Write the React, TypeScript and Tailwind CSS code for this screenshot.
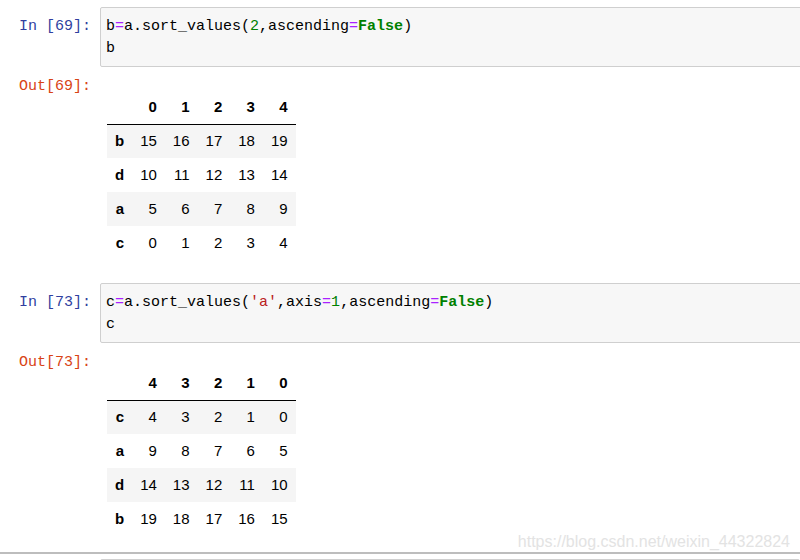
const mono = { fontFamily: '"Liberation Mono", "DejaVu Sans Mono", monospace' };

const tableFont = { fontFamily: '"Liberation Sans", Arial, sans-serif' };

function Eq() {
  return <span className="text-[#aa22ff]">=</span>;
}

function Kw({ children }: { children: string }) {
  return <span className="font-bold text-[#008000]">{children}</span>;
}

function DataTable({ cols, rows }: { cols: string[]; rows: [string, number[]][] }) {
  return (
    <table className="border-collapse text-[15px] text-black" style={tableFont}>
      <thead>
        <tr className="h-[34px] border-b border-black">
          <th className="px-2" />
          {cols.map((c) => (
            <th key={c} className="px-2 text-right font-bold">
              {c}
            </th>
          ))}
        </tr>
      </thead>
      <tbody>
        {rows.map(([idx, vals], i) => (
          <tr key={idx} className={`h-[34px] ${i % 2 === 0 ? "bg-[#f5f5f5]" : "bg-white"}`}>
            <th className="px-2 text-right font-bold">{idx}</th>
            {vals.map((v, j) => (
              <td key={j} className="px-2 text-right">
                {v}
              </td>
            ))}
          </tr>
        ))}
      </tbody>
    </table>
  );
}

function Cell({
  n,
  code,
  cols,
  rows,
}: {
  n: number;
  code: React.ReactNode;
  cols: string[];
  rows: [string, number[]][];
}) {
  return (
    <div className="pt-[7px]">
      <div className="flex">
        <div
          className="w-[100px] shrink-0 pr-[9px] pt-[9px] text-right text-[15px] leading-[22px] text-[#303f9f]"
          style={mono}
        >
          In [{n}]:
        </div>
        <div
          className="-mr-[4px] flex-1 rounded-[2px] border border-[#cfcfcf] bg-[#f7f7f7] pb-[6px] pl-[5px] pt-[8px] text-[15px] leading-[22px] text-black"
          style={mono}
        >
          {code}
        </div>
      </div>
      <div className="flex pt-[7px] pb-[16px]">
        <div
          className="w-[100px] shrink-0 pr-[9px] pt-[2px] text-right text-[15px] leading-[22px] text-[#d84315]"
          style={mono}
        >
          Out[{n}]:
        </div>
        <div className="ml-[7px] pt-[16px]">
          <DataTable cols={cols} rows={rows} />
        </div>
      </div>
    </div>
  );
}

export default function App() {
  return (
    <div className="relative h-[560px] w-[800px] overflow-hidden bg-white">
      <Cell
        n={69}
        code={
          <>
            <div>
              b<Eq />a.sort_values(<span className="text-[#008000]">2</span>,ascending
              <Eq />
              <Kw>False</Kw>)
            </div>
            <div>b</div>
          </>
        }
        cols={["0", "1", "2", "3", "4"]}
        rows={[
          ["b", [15, 16, 17, 18, 19]],
          ["d", [10, 11, 12, 13, 14]],
          ["a", [5, 6, 7, 8, 9]],
          ["c", [0, 1, 2, 3, 4]],
        ]}
      />
      <Cell
        n={73}
        code={
          <>
            <div>
              c<Eq />a.sort_values(<span className="text-[#ba2121]">'a'</span>,axis
              <Eq />
              <span className="text-[#008000]">1</span>,ascending
              <Eq />
              <Kw>False</Kw>)
            </div>
            <div>c</div>
          </>
        }
        cols={["4", "3", "2", "1", "0"]}
        rows={[
          ["c", [4, 3, 2, 1, 0]],
          ["a", [9, 8, 7, 6, 5]],
          ["d", [14, 13, 12, 11, 10]],
          ["b", [19, 18, 17, 16, 15]],
        ]}
      />
      <div className="border-t-2 border-[#bdbdbd] pt-[5px]">
        <div className="ml-[100px] h-[20px] rounded-[2px] border border-[#cfcfcf] bg-[#f7f7f7]" />
      </div>
      <div
        className="absolute right-[10px] top-[531px] text-[16px] leading-[22px] text-[#e3e3e3]"
        style={tableFont}
      >
        https://blog.csdn.net/weixin_44322824
      </div>
    </div>
  );
}
